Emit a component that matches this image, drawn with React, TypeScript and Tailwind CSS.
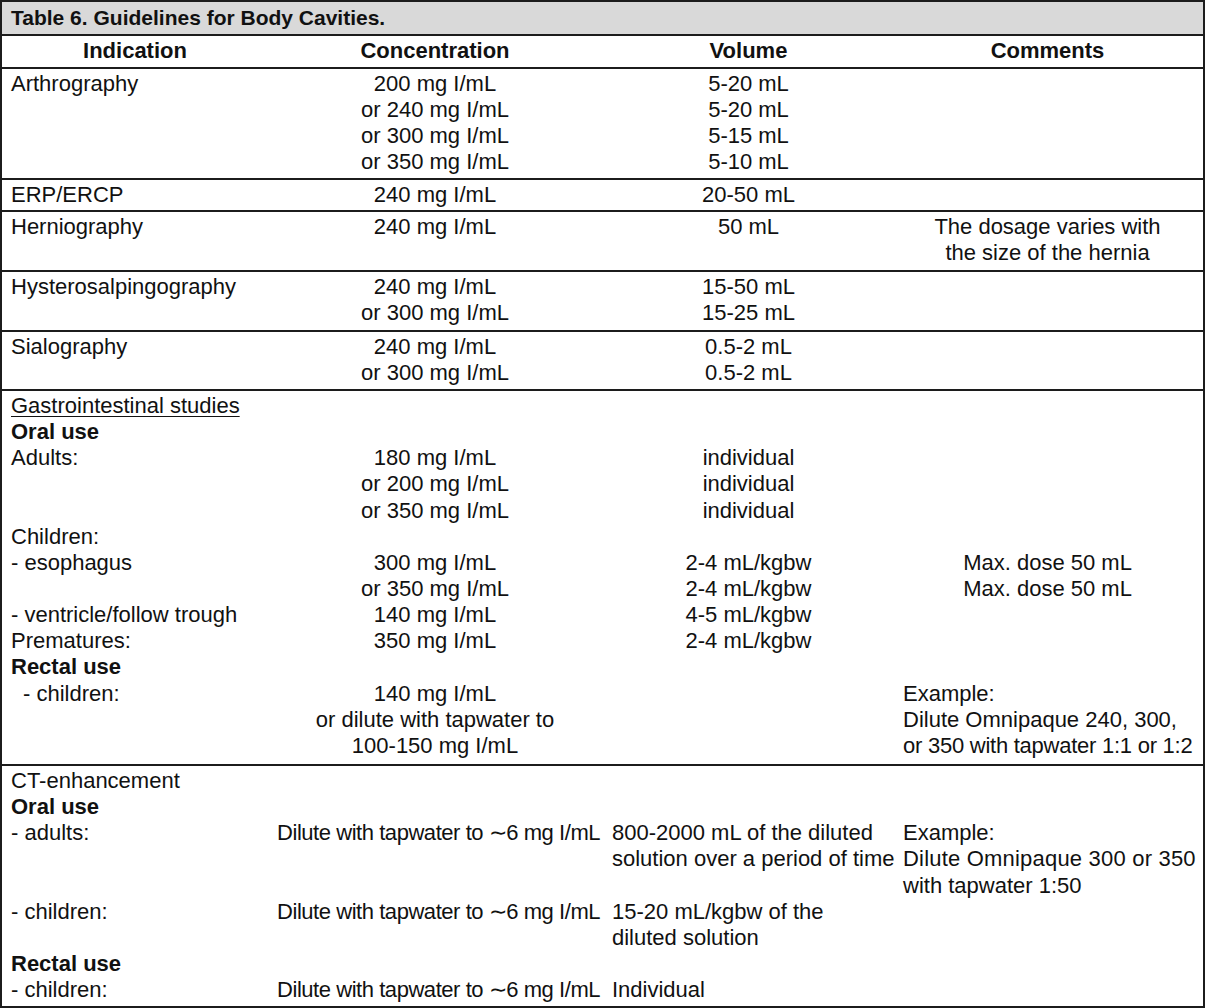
import React from "react";

type Line = { text: string; bold?: boolean; underline?: boolean; align?: "left" | "center"; indent?: boolean; tight?: string };

interface Section {
    height: number;
    cols: Line[][];
}

const L = (text: string, tight?: string): Line => ({ text, align: "left", tight });
const C = (text: string): Line => ({ text, align: "center" });
const B = (text: string): Line => ({ text, bold: true });
const E: Line = { text: "" };

const DILUTE = "Dilute with tapwater to \u223C6 mg I/mL";

const sections: Section[] = [
    {
        height: 109,
        cols: [
            [L("Arthrography")],
            [C("200 mg I/mL"), C("or 240 mg I/mL"), C("or 300 mg I/mL"), C("or 350 mg I/mL")],
            [C("5-20 mL"), C("5-20 mL"), C("5-15 mL"), C("5-10 mL")],
            [],
        ],
    },
    {
        height: 30,
        cols: [[L("ERP/ERCP")], [C("240 mg I/mL")], [C("20-50 mL")], []],
    },
    {
        height: 58,
        cols: [
            [L("Herniography")],
            [C("240 mg I/mL")],
            [C("50 mL")],
            [C("The dosage varies with"), C("the size of the hernia")],
        ],
    },
    {
        height: 58,
        cols: [
            [L("Hysterosalpingography")],
            [C("240 mg I/mL"), C("or 300 mg I/mL")],
            [C("15-50 mL"), C("15-25 mL")],
            [],
        ],
    },
    {
        height: 57,
        cols: [
            [L("Sialography")],
            [C("240 mg I/mL"), C("or 300 mg I/mL")],
            [C("0.5-2 mL"), C("0.5-2 mL")],
            [],
        ],
    },
    {
        height: 373,
        cols: [
            [
                { text: "Gastrointestinal studies", underline: true },
                B("Oral use"),
                L("Adults:"),
                E,
                E,
                L("Children:"),
                L("- esophagus"),
                E,
                L("- ventricle/follow trough"),
                L("Prematures:"),
                B("Rectal use"),
                { text: "- children:", indent: true },
            ],
            [
                E,
                E,
                C("180 mg I/mL"),
                C("or 200 mg I/mL"),
                C("or 350 mg I/mL"),
                E,
                C("300 mg I/mL"),
                C("or 350 mg I/mL"),
                C("140 mg I/mL"),
                C("350 mg I/mL"),
                E,
                C("140 mg I/mL"),
                C("or dilute with tapwater to"),
                C("100-150 mg I/mL"),
            ],
            [
                E,
                E,
                C("individual"),
                C("individual"),
                C("individual"),
                E,
                C("2-4 mL/kgbw"),
                C("2-4 mL/kgbw"),
                C("4-5 mL/kgbw"),
                C("2-4 mL/kgbw"),
            ],
            [
                E,
                E,
                E,
                E,
                E,
                E,
                C("Max. dose 50 mL"),
                C("Max. dose 50 mL"),
                E,
                E,
                E,
                L("Example:"),
                L("Dilute Omnipaque 240, 300,"),
                L("or 350 with tapwater 1:1 or 1:2", "tracking-[-0.25px]"),
            ],
        ],
    },
    {
        height: 240,
        cols: [
            [
                L("CT-enhancement"),
                B("Oral use"),
                L("- adults:"),
                E,
                E,
                L("- children:"),
                E,
                B("Rectal use"),
                L("- children:"),
            ],
            [
                E,
                E,
                L(DILUTE, "tracking-[-0.45px]"),
                E,
                E,
                L(DILUTE, "tracking-[-0.45px]"),
                E,
                E,
                L(DILUTE, "tracking-[-0.45px]"),
            ],
            [
                E,
                E,
                L("800-2000 mL of the diluted"),
                L("solution over a period of time"),
                E,
                L("15-20 mL/kgbw of the"),
                L("diluted solution"),
                E,
                L("Individual"),
            ],
            [
                E,
                E,
                L("Example:"),
                L("Dilute Omnipaque 300 or 350", "tracking-[0.2px]"),
                L("with tapwater 1:50"),
            ],
        ],
    },
];

const colClass = ["pl-[9px] pr-1", "px-[7px]", "px-[7px]", "px-[6px]"];

const Cell = ({ lines, idx }: { lines: Line[]; idx: number }) => (
    <div className={`flex flex-col ${colClass[idx]}`}>
        {lines.map((line, i) => (
            <div
                key={i}
                className={`h-[26.15px] leading-[26.15px] whitespace-nowrap ${line.align === "center" ? "text-center pr-[5px]" : "text-left"} ${line.bold ? "font-bold" : ""} ${line.underline ? "underline underline-offset-[3px] decoration-1" : ""} ${line.indent ? "pl-3" : ""} ${line.tight ?? ""}`}
            >
                {line.text || "\u00A0"}
            </div>
        ))}
    </div>
);

const App = () => {
    return (
        <div
            className="w-[1205px] h-[1008px] bg-white text-[#111] text-[22px]"
            style={{ fontFamily: '"Liberation Sans", Arial, sans-serif' }}
        >
            <div className="border-2 border-[#1c1c1c] w-[1205px]">
                <div className="h-[32px] bg-[#d9d9d9] pl-[9px] flex items-center text-[21px] font-bold">
                    Table 6. Guidelines for Body Cavities.
                </div>
                <div className="border-t-2 border-[#1c1c1c] h-[33px] pt-[2px] grid grid-cols-[268px_335px_292px_1fr] font-bold text-center leading-[26px]">
                    <div className="pr-[2px]">Indication</div>
                    <div className="pr-[5px]">Concentration</div>
                    <div className="pr-[5px]">Volume</div>
                    <div className="pr-[5px]">Comments</div>
                </div>
                {sections.map((s, i) => (
                    <div
                        key={i}
                        className="border-t-2 border-[#1c1c1c] grid grid-cols-[268px_335px_292px_1fr] pt-[2px]"
                        style={{ height: s.height + 2 }}
                    >
                        {s.cols.map((c, j) => (
                            <Cell key={j} lines={c} idx={j} />
                        ))}
                    </div>
                ))}
            </div>
        </div>
    );
};

export default App;
